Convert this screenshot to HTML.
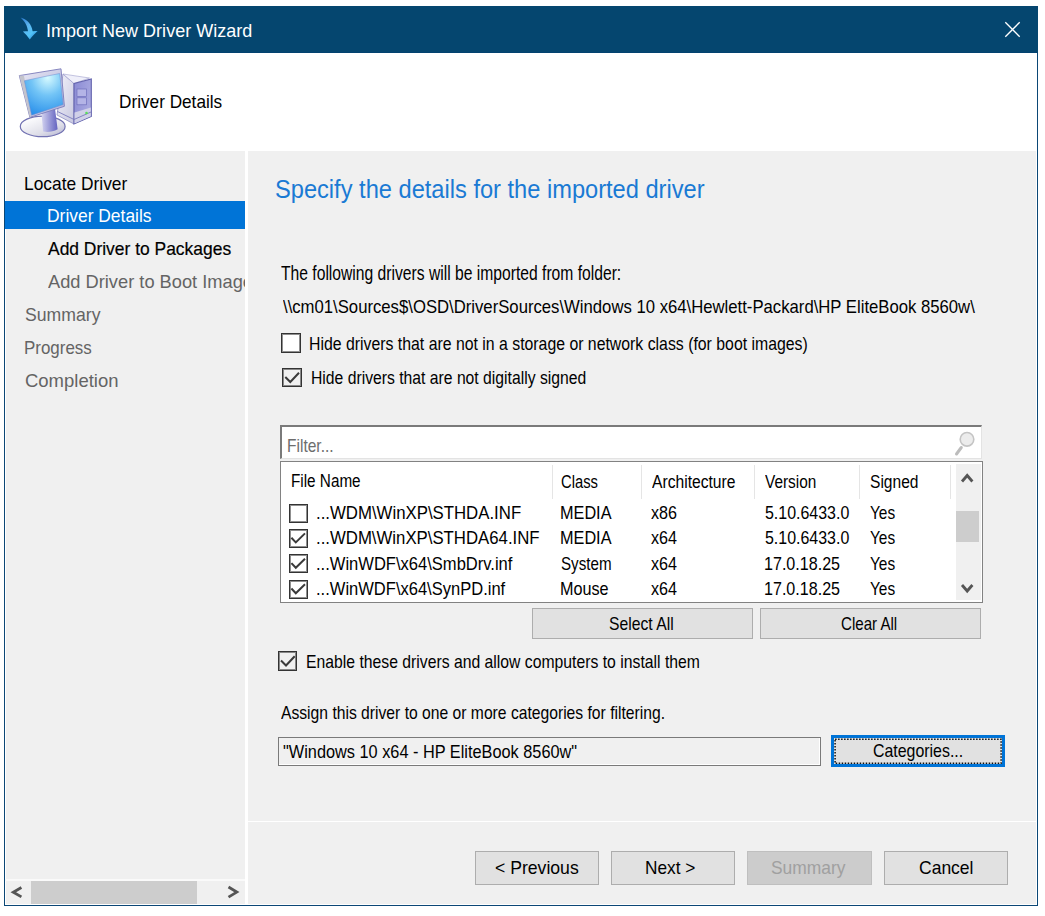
<!DOCTYPE html>
<html><head><meta charset="utf-8">
<style>
*{margin:0;padding:0;box-sizing:border-box}
html,body{width:1045px;height:916px;background:#fff;overflow:hidden;font-family:"Liberation Sans",sans-serif}
.a{position:absolute}
.t{position:absolute;white-space:pre;line-height:1;transform-origin:0 0}
.cb{position:absolute;width:19px;height:19px;border:1px solid #333;box-shadow:inset 0 0 0 1px rgba(51,51,51,0.55)}
.btn{position:absolute;background:#e1e1e1;border:1px solid #adadad}
</style></head><body>
<div class="a" style="left:4px;top:6px;width:1034px;height:900px;border:1px solid #0b4776;border-top:none;background:#f0f0f0"></div>
<div class="a" style="left:5px;top:52px;width:1032px;height:853px;border:1px solid #fff;border-top:none"></div>
<div class="a" style="left:4px;top:6px;width:1034px;height:47px;background:#05466f;border-bottom:1px solid #034270"></div>
<div class="a" style="left:5px;top:53px;width:1032px;height:98px;background:#fff"></div>
<div class="a" style="left:245px;top:151px;width:3px;height:753px;background:#fff"></div>
<div class="a" style="left:248px;top:821px;width:788px;height:1px;background:#fff"></div>
<!-- nav highlight -->
<div class="a" style="left:5px;top:201px;width:240px;height:27.5px;background:#0074d7"></div>
<!-- checkboxes -->
<div class="cb" style="left:281px;top:333.4px;width:19.6px;height:19.4px;background:#fff"></div>
<div class="cb" style="left:282.4px;top:368.2px;width:19.5px;height:19.2px"></div>
<div class="cb" style="left:278.2px;top:651.4px;width:19.3px;height:19.4px"></div>
<!-- filter + list -->
<div class="a" style="left:280px;top:425px;width:702px;height:34px;background:#fff;border-top:2px solid #7a7a7a;border-left:2px solid #7a7a7a;border-right:1px solid #e3e3e3;border-bottom:1px solid #e3e3e3"></div>
<div class="a" style="left:280px;top:461px;width:703px;height:142px;background:#fff;border:1px solid #828282"></div>
<div class="a" style="left:956px;top:464px;width:25px;height:136px;background:#f0f0f0"></div>
<div class="a" style="left:956px;top:510.5px;width:22.5px;height:31.5px;background:#cdcdcd"></div>
<div class="a" style="left:552px;top:465px;width:1px;height:34px;background:#e5e5e5"></div>
<div class="a" style="left:641px;top:465px;width:1px;height:34px;background:#e5e5e5"></div>
<div class="a" style="left:754px;top:465px;width:1px;height:34px;background:#e5e5e5"></div>
<div class="a" style="left:859px;top:465px;width:1px;height:34px;background:#e5e5e5"></div>
<div class="a" style="left:950px;top:465px;width:1px;height:34px;background:#e5e5e5"></div>
<div class="cb" style="left:288.8px;top:503.5px"></div>
<div class="cb" style="left:288.8px;top:528.8px"></div>
<div class="cb" style="left:288.8px;top:554.2px"></div>
<div class="cb" style="left:288.8px;top:579.6px"></div>
<!-- buttons -->
<div class="btn" style="left:532px;top:608px;width:221px;height:31px"></div>
<div class="btn" style="left:760px;top:608px;width:221px;height:31px"></div>
<div class="a" style="left:278.3px;top:737.2px;width:542.5px;height:29.3px;border:1px solid #7a7a7a;box-shadow:inset -1px -1px 0 #fff"></div>
<div class="btn" style="left:831.2px;top:735.3px;width:173.8px;height:31.4px;border:3px solid #0074d7"></div>
<svg class="a" style="left:830px;top:734px" width="180" height="36" viewBox="830 734 180 36"><rect x="835.1" y="739.2" width="166" height="24.1" fill="none" stroke="#111" stroke-width="1.5" stroke-dasharray="1.5 1.5"/></svg>
<div class="btn" style="left:474.7px;top:851px;width:124px;height:34px"></div>
<div class="btn" style="left:611.3px;top:851px;width:124px;height:34px"></div>
<div class="btn" style="left:747.3px;top:851px;width:124.7px;height:34px;background:#cccccc;border-color:#bfbfbf"></div>
<div class="btn" style="left:884px;top:851px;width:124px;height:34px"></div>
<!-- horizontal scrollbar -->
<div class="a" style="left:5px;top:879px;width:240px;height:2px;background:#fafafa"></div>
<div class="a" style="left:30.6px;top:881px;width:166px;height:22.6px;background:#cdcdcd"></div>
<svg class="a" style="left:0;top:0" width="1045" height="916" viewBox="0 0 1045 916">
<g stroke="#3a3a3a" stroke-width="2" fill="none">
<path d="M285.3 377 L290.3 382 L299 372.8"/>
<path d="M281 660.5 L286 665.5 L294.7 656.3"/>
<path d="M291.4 537.7 L295.8 542.4 L305 533.4"/>
<path d="M291.4 563.1 L295.8 567.8 L305 558.8"/>
<path d="M291.4 588.5 L295.8 593.2 L305 584.2"/>
</g>
<g stroke="#555" stroke-width="2.8" fill="none">
<path d="M962 481.5 L967.2 475.5 L972.4 481.5"/>
<path d="M962 585 L967.2 591 L972.4 585"/>
<path d="M21.4 887.5 L13.3 892.2 L21.4 896.9"/>
<path d="M228.5 887 L236.8 892.1 L228.5 897.1"/>
</g>
<circle cx="967" cy="439.3" r="6.8" fill="#ececec" stroke="#c4c4c4" stroke-width="1.6"/>
<path d="M961.3 447.5 L956.5 454" stroke="#bcbcbc" stroke-width="3" stroke-linecap="round"/>
</svg>
<!-- title arrow -->
<svg class="a" style="left:0;top:0" width="60" height="52" viewBox="0 0 60 52">
<defs><linearGradient id="ag" x1="0" y1="0" x2="0.8" y2="1"><stop offset="0" stop-color="#2a78d0"/><stop offset="0.45" stop-color="#5cb6f0"/><stop offset="0.75" stop-color="#52c4f8"/><stop offset="1" stop-color="#2a86d8"/></linearGradient></defs>
<path d="M20.6 17.4 C25.5 18.8 30.5 22.5 32 28.5 L32.6 31.2 C34 31.2 36 31 37.6 31 C35 33.5 32 36.5 29.8 39.6 C27.8 36.8 25.5 34 22.9 31.6 C24.6 31.4 26.4 31.3 28 31.3 C27.6 26 24.6 21 20.6 17.4 Z" fill="url(#ag)"/>
</svg>
<!-- close X -->
<svg class="a" style="left:1000px;top:17px" width="26" height="26" viewBox="1000 17 26 26">
<path d="M1005.3 22.3 L1019.7 36.7 M1019.7 22.3 L1005.3 36.7" stroke="#fff" stroke-width="1.3" fill="none"/>
</svg>
<!-- computer icon -->
<svg class="a" style="left:0;top:55px" width="100" height="95" viewBox="0 55 100 95">
<defs>
<radialGradient id="scr" cx="0.6" cy="0.1" r="0.95"><stop offset="0" stop-color="#d6faff"/><stop offset="0.45" stop-color="#72c4f6"/><stop offset="1" stop-color="#2a90ea"/></radialGradient>
<linearGradient id="base" x1="0.2" y1="0.2" x2="0.9" y2="1"><stop offset="0" stop-color="#fafafc"/><stop offset="0.6" stop-color="#dedee8"/><stop offset="1" stop-color="#b4b4d2"/></linearGradient>
<linearGradient id="neck" x1="0" y1="0" x2="1" y2="0"><stop offset="0" stop-color="#d4d4f0"/><stop offset="0.5" stop-color="#9a9ad8"/><stop offset="1" stop-color="#6464c0"/></linearGradient>
<linearGradient id="front" x1="0" y1="0" x2="1" y2="0.4"><stop offset="0" stop-color="#8a8ad4"/><stop offset="1" stop-color="#a8a8e0"/></linearGradient>
<linearGradient id="side" x1="0" y1="0" x2="1" y2="1"><stop offset="0" stop-color="#f2f2fa"/><stop offset="1" stop-color="#c8c8e0"/></linearGradient>
<linearGradient id="bez" x1="0" y1="0" x2="1" y2="1"><stop offset="0" stop-color="#e8e8f4"/><stop offset="1" stop-color="#b0b0d8"/></linearGradient>
</defs>
<!-- tower side -->
<path d="M63 74 L74 83.5 L74 124 L57 115 Z" fill="url(#side)" stroke="#8e8ec4" stroke-width="0.8"/>
<!-- tower top -->
<path d="M63 74 L89.5 78 L74 83.5 Z" fill="#f0f0fa" stroke="#a0a0cc" stroke-width="0.6"/>
<!-- tower front -->
<path d="M74 83.5 L91.3 79 L91.3 116.5 L74 124 Z" fill="url(#front)" stroke="#6262ac" stroke-width="1.1"/>
<path d="M74.5 112.5 L90.8 107.5 L90.8 116.2 L74.5 123.5 Z" fill="#d0d0e8"/>
<path d="M57.5 111.5 L74 119.5 L91 112" stroke="#7a7abc" stroke-width="0.9" fill="none"/>
<rect x="77" y="89" width="9.5" height="7.5" fill="#b4b4e6" stroke="#7070bc" stroke-width="0.7"/>
<rect x="77" y="97.8" width="9.5" height="7" fill="#b4b4e6" stroke="#7070bc" stroke-width="0.7"/>
<circle cx="86.5" cy="113" r="1.3" fill="#58e058"/>
<!-- base -->
<ellipse cx="42.7" cy="126.4" rx="22.4" ry="10.3" fill="url(#base)" stroke="#7272b2" stroke-width="1.2"/>
<!-- neck -->
<path d="M41.4 112 L55 108.5 L57.6 129.3 C53 132 47 132.5 43.1 131.5 Z" fill="url(#neck)"/>
<!-- bezel -->
<path d="M19.3 75.6 L61 68.8 L64.4 106.3 L29.9 117.4 Z" fill="url(#bez)" stroke="#7c7cba" stroke-width="0.9"/>
<path d="M19.3 75.6 L24 76 L31.2 116 L29.9 117.4 Z" fill="#c4c4cc"/>
<!-- screen -->
<path d="M24.4 80.7 L59.7 73.5 L63.1 104.6 L31.6 115.2 Z" fill="url(#scr)" stroke="#6a8ad0" stroke-width="0.5"/>
</svg>
<div class="t" style="left:46.24px;top:22.00px;font-size:18.84px;color:#fff;transform:scaleX(0.9569);">Import New Driver Wizard</div>
<div class="t" style="left:119.19px;top:93.00px;font-size:18.84px;color:#000;transform:scaleX(0.9133);">Driver Details</div>
<div class="t" style="left:24.28px;top:175.00px;font-size:18.84px;color:#000;transform:scaleX(0.9223);">Locate Driver</div>
<div class="t" style="left:46.58px;top:207.00px;font-size:18.84px;color:#fff;transform:scaleX(0.9250);">Driver Details</div>
<div class="t" style="left:47.50px;top:240.00px;font-size:18.84px;color:#000;transform:scaleX(0.9257);-webkit-text-stroke:0.2px #000">Add Driver to Packages</div>
<div class="a" style="left:5px;top:268px;width:240px;height:30px;overflow:hidden"><div class="t" style="left:42.50px;top:5px;font-size:18.84px;color:#646464;transform:scaleX(0.9696);">Add Driver to Boot Image</div></div>
<div class="t" style="left:25.00px;top:306.00px;font-size:18.84px;color:#646464;transform:scaleX(0.9367);">Summary</div>
<div class="t" style="left:24.10px;top:339.00px;font-size:18.84px;color:#646464;transform:scaleX(0.8995);">Progress</div>
<div class="t" style="left:25.00px;top:372.00px;font-size:18.84px;color:#646464;transform:scaleX(0.9814);">Completion</div>
<div class="t" style="left:275.06px;top:177.00px;font-size:25.22px;color:#1a7ad4;transform:scaleX(0.9372);">Specify the details for the imported driver</div>
<div class="t" style="left:281.20px;top:264.00px;font-size:19.57px;color:#000;transform:scaleX(0.8003);">The following drivers will be imported from folder:</div>
<div class="t" style="left:283.00px;top:298.00px;font-size:18.84px;color:#000;transform:scaleX(0.8866);">\\cm01\Sources$\OSD\DriverSources\Windows 10 x64\Hewlett-Packard\HP EliteBook 8560w\</div>
<div class="t" style="left:308.98px;top:334.00px;font-size:19.28px;color:#000;transform:scaleX(0.8215);">Hide drivers that are not in a storage or network class (for boot images)</div>
<div class="t" style="left:310.68px;top:368.00px;font-size:19.28px;color:#000;transform:scaleX(0.8158);">Hide drivers that are not digitally signed</div>
<div class="t" style="left:286.87px;top:437.00px;font-size:18.84px;color:#6d6d6d;transform:scaleX(0.8256);">Filter...</div>
<div class="t" style="left:291.46px;top:472.00px;font-size:18.12px;color:#000;transform:scaleX(0.8435);">File Name</div>
<div class="t" style="left:561.00px;top:473.00px;font-size:18.12px;color:#000;transform:scaleX(0.8159);">Class</div>
<div class="t" style="left:651.60px;top:473.00px;font-size:18.12px;color:#000;transform:scaleX(0.8638);">Architecture</div>
<div class="t" style="left:764.50px;top:473.00px;font-size:18.12px;color:#000;transform:scaleX(0.8495);">Version</div>
<div class="t" style="left:869.60px;top:473.00px;font-size:18.12px;color:#000;transform:scaleX(0.8605);">Signed</div>
<div class="t" style="left:315.51px;top:504.00px;font-size:18.84px;color:#000;transform:scaleX(0.8914);">...WDM\WinXP\STHDA.INF</div>
<div class="t" style="left:560.14px;top:504.00px;font-size:18.84px;color:#000;transform:scaleX(0.8634);">MEDIA</div>
<div class="t" style="left:651.00px;top:504.00px;font-size:18.84px;color:#000;transform:scaleX(0.8566);">x86</div>
<div class="t" style="left:764.50px;top:504.00px;font-size:18.84px;color:#000;transform:scaleX(0.8475);">5.10.6433.0</div>
<div class="t" style="left:870.00px;top:504.00px;font-size:18.84px;color:#000;transform:scaleX(0.8185);">Yes</div>
<div class="t" style="left:315.51px;top:529.00px;font-size:18.84px;color:#000;transform:scaleX(0.8904);">...WDM\WinXP\STHDA64.INF</div>
<div class="t" style="left:560.14px;top:529.00px;font-size:18.84px;color:#000;transform:scaleX(0.8634);">MEDIA</div>
<div class="t" style="left:651.00px;top:529.00px;font-size:18.84px;color:#000;transform:scaleX(0.8566);">x64</div>
<div class="t" style="left:764.50px;top:529.00px;font-size:18.84px;color:#000;transform:scaleX(0.8475);">5.10.6433.0</div>
<div class="t" style="left:870.00px;top:529.00px;font-size:18.84px;color:#000;transform:scaleX(0.8185);">Yes</div>
<div class="t" style="left:315.52px;top:555.00px;font-size:18.84px;color:#000;transform:scaleX(0.8787);">...WinWDF\x64\SmbDrv.inf</div>
<div class="t" style="left:561.00px;top:555.00px;font-size:18.84px;color:#000;transform:scaleX(0.8053);">System</div>
<div class="t" style="left:651.00px;top:555.00px;font-size:18.84px;color:#000;transform:scaleX(0.8566);">x64</div>
<div class="t" style="left:763.65px;top:555.00px;font-size:18.84px;color:#000;transform:scaleX(0.8547);">17.0.18.25</div>
<div class="t" style="left:870.00px;top:555.00px;font-size:18.84px;color:#000;transform:scaleX(0.8185);">Yes</div>
<div class="t" style="left:315.52px;top:580.00px;font-size:18.84px;color:#000;transform:scaleX(0.8779);">...WinWDF\x64\SynPD.inf</div>
<div class="t" style="left:560.14px;top:580.00px;font-size:18.84px;color:#000;transform:scaleX(0.8594);">Mouse</div>
<div class="t" style="left:651.00px;top:580.00px;font-size:18.84px;color:#000;transform:scaleX(0.8566);">x64</div>
<div class="t" style="left:763.65px;top:580.00px;font-size:18.84px;color:#000;transform:scaleX(0.8547);">17.0.18.25</div>
<div class="t" style="left:870.00px;top:580.00px;font-size:18.84px;color:#000;transform:scaleX(0.8185);">Yes</div>
<div class="t" style="left:608.50px;top:615.00px;font-size:18.84px;color:#000;transform:scaleX(0.8344);">Select All</div>
<div class="t" style="left:840.60px;top:615.00px;font-size:18.84px;color:#000;transform:scaleX(0.8018);">Clear All</div>
<div class="t" style="left:306.46px;top:653.00px;font-size:18.84px;color:#000;transform:scaleX(0.8364);">Enable these drivers and allow computers to install them</div>
<div class="t" style="left:281.00px;top:704.00px;font-size:18.84px;color:#000;transform:scaleX(0.8321);">Assign this driver to one or more categories for filtering.</div>
<div class="t" style="left:282.80px;top:743.00px;font-size:18.84px;color:#000;transform:scaleX(0.8662);">&quot;Windows 10 x64 - HP EliteBook 8560w&quot;</div>
<div class="t" style="left:872.50px;top:742.00px;font-size:18.84px;color:#000;transform:scaleX(0.8444);">Categories...</div>
<div class="t" style="left:494.70px;top:859.00px;font-size:18.84px;color:#000;transform:scaleX(0.9353);">&lt; Previous</div>
<div class="t" style="left:645.08px;top:859.00px;font-size:18.84px;color:#000;transform:scaleX(0.9158);">Next &gt;</div>
<div class="t" style="left:770.60px;top:859.00px;font-size:18.84px;color:#a0a0a0;transform:scaleX(0.9256);">Summary</div>
<div class="t" style="left:918.60px;top:859.00px;font-size:18.84px;color:#000;transform:scaleX(0.9299);">Cancel</div>
</body></html>
